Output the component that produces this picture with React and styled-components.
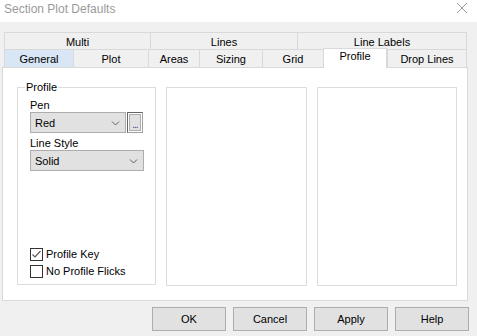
import React from "react";
import styled, { createGlobalStyle } from "styled-components";

const GlobalStyle = createGlobalStyle`
  html, body {
    margin: 0;
    padding: 0;
    background: #f0f0f0;
  }
  body {
    font-family: "Liberation Sans", Arial, sans-serif;
    font-size: 11px;
    color: #000;
  }
`;

const Dialog = styled.div`
  width: 477px;
  height: 336px;
  display: flex;
  flex-direction: column;
  background: #f0f0f0;
  overflow: hidden;
`;

const TitleBar = styled.div`
  height: 22px;
  background: #fff;
  display: flex;
  align-items: center;
  justify-content: space-between;
  padding: 0 9px 0 4px;
  flex-shrink: 0;
`;

const Title = styled.span`
  font-size: 12px;
  color: #9a9a9a;
  margin-top: -4px;
`;

const CloseIcon = styled.svg`
  width: 12px;
  height: 12px;
  margin-top: -6px;
`;

const TabArea = styled.div`
  margin-top: 10px;
  padding: 0 10px 0 4px;
  display: flex;
  flex-direction: column;
`;

const TabRow = styled.div`
  display: flex;
`;

const Tab = styled.div`
  box-sizing: border-box;
  width: ${p => p.$w}px;
  height: ${p => p.$h}px;
  border: 1px solid #d9d9d9;
  border-bottom: none;
  border-right: ${p => (p.$last ? "1px solid #d9d9d9" : "none")};
  background: ${p => (p.$hover ? "#d8e6f5" : "transparent")};
  display: flex;
  align-items: center;
  justify-content: center;
  padding-top: 2px;
  line-height: 13px;
  white-space: nowrap;
`;

const ActiveTab = styled(Tab)`
  background: #fff;
  height: ${p => p.$h + 2}px;
  margin-top: -1px;
  margin-bottom: -1px;
  position: relative;
  z-index: 1;
  padding-top: 0;
  padding-bottom: 5px;
`;

const Page = styled.div`
  box-sizing: border-box;
  margin: 0 9px 0 2px;
  height: 234px;
  background: #fff;
  border: 1px solid #d9d9d9;
  display: flex;
  align-items: flex-start;
  padding: 19px 10px 0 14px;
  gap: 10px;
`;

const GroupBox = styled.fieldset`
  box-sizing: border-box;
  width: 140px;
  height: 204px;
  margin: -6px 0 0 0;
  padding: 5px 12px 6px 12px;
  border: 1px solid #dcdcdc;
  display: flex;
  flex-direction: column;
  min-width: 0;
`;

const Legend = styled.legend`
  padding: 0 1px;
  margin-left: -5px;
  line-height: 13px;
`;

const EmptyBox = styled.div`
  box-sizing: border-box;
  width: 141px;
  height: 199px;
  border: 1px solid #dcdcdc;
`;

const FieldLabel = styled.div`
  line-height: 13px;
  margin-top: ${p => p.$mt || 0}px;
`;

const ComboRow = styled.div`
  display: flex;
  align-items: center;
  gap: 1px;
`;

const Combo = styled.div`
  box-sizing: border-box;
  width: ${p => p.$w}px;
  height: 21px;
  background: #e1e1e1;
  border: 1px solid #adadad;
  display: flex;
  align-items: center;
  justify-content: space-between;
  padding: 0 5px 0 4px;
`;

const Chevron = styled.svg`
  width: 9px;
  height: 6px;
`;

const DotsButton = styled.div`
  box-sizing: border-box;
  width: 17px;
  height: 21px;
  border: 1px solid #646464;
  border-right-color: #a0a0a0;
  border-bottom-color: #a0a0a0;
  padding: 1px;
  display: flex;
`;

const DotsInner = styled.div`
  flex: 1;
  border: 1px solid #adadad;
  background: #e1e1e1;
  display: flex;
  align-items: flex-end;
  justify-content: center;
  font-size: 10px;
  line-height: 10px;
  color: #3c3c8c;
  letter-spacing: -1px;
`;

const Spacer = styled.div`
  flex: 1;
`;

const CheckRow = styled.label`
  display: flex;
  align-items: center;
  gap: 3px;
  height: 13px;
  margin-top: ${p => p.$mt || 0}px;
  line-height: 13px;
  white-space: nowrap;
`;

const Box = styled.span`
  box-sizing: border-box;
  width: 13px;
  height: 13px;
  border: 1px solid #333;
  background: #fff;
  display: flex;
  align-items: center;
  justify-content: center;
  flex-shrink: 0;
`;

const ButtonBar = styled.div`
  display: flex;
  justify-content: flex-end;
  gap: 7px;
  padding: 6px 8px 0 0;
`;

const Button = styled.div`
  box-sizing: border-box;
  width: 74px;
  height: 24px;
  background: #e1e1e1;
  border: 1px solid #adadad;
  display: flex;
  align-items: center;
  justify-content: center;
`;

const ChevronIcon = () => (
  <Chevron viewBox="0 0 9 6">
    <path d="M1 1.5 L4.5 5 L8 1.5" fill="none" stroke="#606060" strokeWidth="1" />
  </Chevron>
);

function Checkbox({ checked, label, mt }) {
  return (
    <CheckRow $mt={mt}>
      <Box>
        {checked && (
          <svg width="11" height="11" viewBox="0 0 11 11">
            <path d="M1.5 5.5 L4 8 L9.5 2" fill="none" stroke="#5a5a5a" strokeWidth="1.2" />
          </svg>
        )}
      </Box>
      {label}
    </CheckRow>
  );
}

const topTabs = [
  { label: "Multi", w: 146 },
  { label: "Lines", w: 147 },
  { label: "Line Labels", w: 170 },
];

const bottomTabs = [
  { label: "General", w: 69, hover: true },
  { label: "Plot", w: 75 },
  { label: "Areas", w: 51 },
  { label: "Sizing", w: 63 },
  { label: "Grid", w: 61 },
  { label: "Profile", w: 64, active: true },
  { label: "Drop Lines", w: 80 },
];

export default function App() {
  return (
    <>
      <GlobalStyle />
      <Dialog>
        <TitleBar>
          <Title>Section Plot Defaults</Title>
          <CloseIcon viewBox="0 0 12 12">
            <path d="M1 1 L11 11 M11 1 L1 11" stroke="#9a9a9a" strokeWidth="1" />
          </CloseIcon>
        </TitleBar>

        <TabArea>
          <TabRow>
            {topTabs.map((t, i) => (
              <Tab key={t.label} $w={t.w} $h={17} $last={i === topTabs.length - 1}>
                {t.label}
              </Tab>
            ))}
          </TabRow>
          <TabRow>
            {bottomTabs.map((t, i) => {
              const last = i === bottomTabs.length - 1;
              return t.active ? (
                <ActiveTab key={t.label} $w={t.w} $h={18} $last>
                  {t.label}
                </ActiveTab>
              ) : (
                <Tab key={t.label} $w={t.w} $h={18} $last={last} $hover={t.hover}>
                  {t.label}
                </Tab>
              );
            })}
          </TabRow>
        </TabArea>

        <Page>
          <GroupBox>
            <Legend>Profile</Legend>
            <FieldLabel>Pen</FieldLabel>
            <ComboRow>
              <Combo $w={96}>
                Red
                <ChevronIcon />
              </Combo>
              <DotsButton>
                <DotsInner>...</DotsInner>
              </DotsButton>
            </ComboRow>
            <FieldLabel $mt={4}>Line Style</FieldLabel>
            <Combo $w={114}>
              Solid
              <ChevronIcon />
            </Combo>
            <Spacer />
            <Checkbox checked label="Profile Key" />
            <Checkbox label="No Profile Flicks" mt={4} />
          </GroupBox>
          <EmptyBox />
          <EmptyBox />
        </Page>

        <ButtonBar>
          <Button>OK</Button>
          <Button>Cancel</Button>
          <Button>Apply</Button>
          <Button>Help</Button>
        </ButtonBar>
      </Dialog>
    </>
  );
}
